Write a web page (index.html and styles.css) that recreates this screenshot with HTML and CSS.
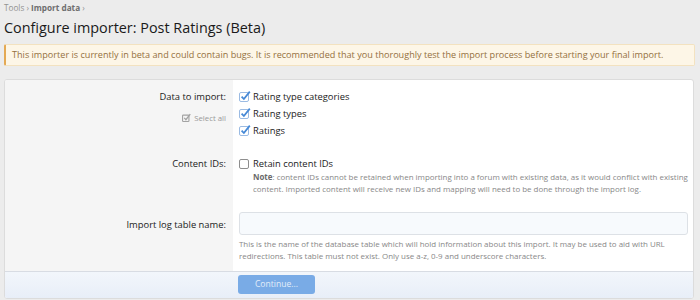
FILE: index.html
```html
<!DOCTYPE html>
<html>
<head>
<meta charset="utf-8">
<link rel="stylesheet" href="styles.css">
</head>
<body>
<div class="crumbs">Tools <span class="sep">›</span> <b>Import data</b> <span class="sep">›</span></div>
<h1 class="title">Configure importer: Post Ratings (Beta)</h1>
<div class="notice">This importer is currently in beta and could contain bugs. It is recommended that you thoroughly test the import process before starting your final import.</div>
<div class="block">
  <div class="row row-data">
    <div class="label">
      <div class="lbl">Data to import:</div>
      <div class="selall"><svg class="selicon" width="9" height="9" viewBox="0 0 12 12"><rect x="0.75" y="2.75" width="8.5" height="8.5" rx="1" fill="none" stroke="#a3a3a3" stroke-width="1.5"/><path d="M3 6.5 L5.2 8.8 L11 1.5" fill="none" stroke="#a3a3a3" stroke-width="1.8"/></svg>Select all</div>
    </div>
    <div class="field">
      <label class="cb"><svg class="ck" width="12" height="12" viewBox="0 0 12 12"><rect x="0.5" y="2.5" width="9" height="9" rx="1.5" fill="#fff" stroke="#9bbbe3"/><path d="M2.6 6.6 L4.9 9 L10.8 1.6" fill="none" stroke="#4689d6" stroke-width="1.8"/></svg>Rating type categories</label>
      <label class="cb"><svg class="ck" width="12" height="12" viewBox="0 0 12 12"><rect x="0.5" y="2.5" width="9" height="9" rx="1.5" fill="#fff" stroke="#9bbbe3"/><path d="M2.6 6.6 L4.9 9 L10.8 1.6" fill="none" stroke="#4689d6" stroke-width="1.8"/></svg>Rating types</label>
      <label class="cb"><svg class="ck" width="12" height="12" viewBox="0 0 12 12"><rect x="0.5" y="2.5" width="9" height="9" rx="1.5" fill="#fff" stroke="#9bbbe3"/><path d="M2.6 6.6 L4.9 9 L10.8 1.6" fill="none" stroke="#4689d6" stroke-width="1.8"/></svg>Ratings</label>
    </div>
  </div>
  <div class="row row-ids">
    <div class="label"><div class="lbl lbl-ids">Content IDs:</div></div>
    <div class="field">
      <label class="cb cb-ids"><svg class="ck" width="12" height="12" viewBox="0 0 12 12"><rect x="0.5" y="2.5" width="9" height="9" rx="1.5" fill="#fff" stroke="#8e8e8e"/></svg>Retain content IDs</label>
      <div class="hint hint-note"><b>Note</b>: content IDs cannot be retained when importing into a forum with existing data, as it would conflict with existing<br>content. Imported content will receive new IDs and mapping will need to be done through the import log.</div>
    </div>
  </div>
  <div class="row row-input">
    <div class="label"><div class="lbl lbl-input">Import log table name:</div></div>
    <div class="field">
      <div class="input"></div>
      <div class="hint hint-help">This is the name of the database table which will hold information about this import. It may be used to aid with URL<br>redirections. This table must not exist. Only use a-z, 0-9 and underscore characters.</div>
    </div>
  </div>
  <div class="footer"><span class="btn">Continue...</span></div>
</div>
</body>
</html>
```
FILE: styles.css
```css
html, body { margin: 0; padding: 0; }
body {
  background: #ececec;
  font-family: "Open Sans", "Noto Sans", sans-serif;
  color: #1e1e1e;
  overflow: hidden;
  height: 300px;
}
.crumbs {
  font-size: 8.2px;
  color: #929292;
  padding: 2px 4px 0;
  height: 12px;
  line-height: 12px;
}
.crumbs b { color: #6e6e6e; font-weight: 700; }
.title {
  margin: 4px 4px 0;
  font-size: 14.4px;
  font-weight: 400;
  line-height: 20px;
  height: 20px;
  color: #1a1a1a;
}
.notice {
  margin: 6px 5px 0 4px;
  height: 20px;
  line-height: 20px;
  background: #fdf6e7;
  border: 1px solid #f3e2c0;
  border-left: 2px solid #e4a953;
  border-radius: 2px;
  color: #94703e;
  font-size: 9.1px;
  padding-left: 6px;
  white-space: nowrap;
}
.block {
  margin: 13px 6px 0 4px;
  border: 1px solid #dcdcdc;
  border-radius: 3px;
  background: #fff;
  overflow: hidden;
}
.row { display: flex; }
.label {
  width: 228px;
  flex: none;
  background: #f5f5f5;
  text-align: right;
  padding-right: 7px;
  box-sizing: border-box;
  color: #222;
  font-size: 9.4px;
}
.lbl { line-height: 17px; }
.field {
  flex: 1;
  padding: 0 5px 0 6px;
  font-size: 9.4px;
  color: #1c1c1c;
}
.row-data .label, .row-data .field { padding-top: 8px; padding-bottom: 18px; }
.row-ids .label, .row-ids .field { padding-top: 0; padding-bottom: 10px; }
.lbl-ids { line-height: 14px; }
.row-input .label, .row-input .field { padding-top: 7px; padding-bottom: 9px; }
.lbl-input { padding-top: 4px; }
.selall {
  margin-top: 6px;
  font-size: 7.8px;
  color: #999;
  line-height: 14px;
}
.selicon { vertical-align: -1px; margin-right: 3px; }
.cb { display: flex; align-items: center; height: 17px; line-height: 17px; }
.cb-ids { height: 14px; line-height: 14px; }
.ck { flex: none; margin-right: 2px; position: relative; top: -1px; }
.hint {
  font-size: 7.95px;
  color: #888;
  line-height: 12px;
  white-space: nowrap;
}
.hint b { color: #6a6a6a; font-weight: 700; }
.hint-note { padding-left: 14px; }
.input {
  height: 23px;
  box-sizing: border-box;
  border: 1px solid #dde1e6;
  border-radius: 3px;
  background: #f7fafd;
}
.hint-help { margin-top: 3px; }
.footer {
  display: flex;
  align-items: flex-start;
  border-top: 1px solid #d8dce3;
  background: linear-gradient(#f2f6fb, #e8eef8);
  height: 27px;
  padding-left: 233px;
  padding-top: 3px;
  box-sizing: border-box;
}
.btn {
  display: block;
  width: 77px;
  height: 19px;
  line-height: 19px;
  text-align: center;
  background: #79abe6;
  color: #e3edf9;
  border-radius: 3px;
  font-size: 8.6px;
}
```
